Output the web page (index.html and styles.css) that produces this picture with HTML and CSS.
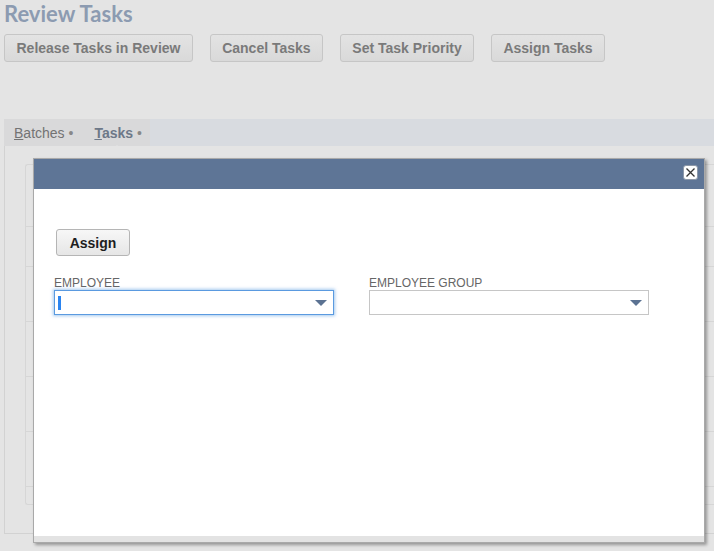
FILE: index.html
```html
<!DOCTYPE html>
<html lang="en">
<head>
<meta charset="utf-8">
<title>Review Tasks</title>
<link rel="stylesheet" href="styles.css">
</head>
<body>
<div class="page">
  <h1 class="title">Review Tasks</h1>
  <div class="toolbar">
    <button class="tbtn">Release Tasks in Review</button>
    <button class="tbtn">Cancel Tasks</button>
    <button class="tbtn">Set Task Priority</button>
    <button class="tbtn">Assign Tasks</button>
  </div>
  <div class="tabbar">
    <div class="tabs">
      <span class="tab"><u>B</u>atches <span class="dot">&bull;</span></span>
      <span class="tab active"><u>T</u>asks <span class="dot">&bull;</span></span>
    </div>
  </div>
  <div class="panel">
    <div class="grid">
      <div class="row r1"></div>
      <div class="row r2"></div>
      <div class="row r3"></div>
      <div class="row r3"></div>
      <div class="row r3"></div>
      <div class="row r3"></div>
    </div>
  </div>
</div>

<div class="modal">
  <div class="modal-head">
    <span class="close">
      <svg width="11" height="11" viewBox="0 0 11 11"><path d="M1.5 1.5 L9.5 9.5 M9.5 1.5 L1.5 9.5" stroke="#333" stroke-width="1.3" fill="none"/></svg>
    </span>
  </div>
  <div class="modal-body">
    <button class="assign">Assign</button>
    <div class="fields">
      <div class="field">
        <label>EMPLOYEE</label>
        <div class="select focused"><span class="caret"></span><span class="arrow"></span></div>
      </div>
      <div class="field">
        <label>EMPLOYEE GROUP</label>
        <div class="select"><span class="arrow"></span></div>
      </div>
    </div>
  </div>
  <div class="modal-foot"></div>
</div>
</body>
</html>
```
FILE: styles.css
```css
html, body {
  margin: 0;
  padding: 0;
  background: #e4e4e4;
  font-family: "Liberation Sans", Arial, sans-serif;
  overflow: hidden;
}
.page {
  padding: 0 0 0 4px;
  width: 720px;
}
.title {
  margin: 0;
  font-family: Lato, "Liberation Sans", sans-serif;
  font-weight: 700;
  font-size: 22px;
  line-height: 28px;
  color: #8c9bb1;
  height: 34px;
}
.toolbar {
  display: flex;
  gap: 16.7px;
  height: 28px;
}
.tbtn {
  font-family: "Liberation Sans", Arial, sans-serif;
  font-weight: 700;
  font-size: 14px;
  color: #7a7a7a;
  height: 28px;
  padding: 0 11.5px;
  border: 1px solid #c6c6c6;
  border-radius: 3px;
  background: linear-gradient(#e3e3e3, #d9d9d9);
  margin: 0;
}
.tabbar {
  margin-top: 57px;
  height: 27px;
  background: #d8dbe0;
  display: flex;
}
.tabs {
  width: 146px;
  background: #d9d9da;
  position: relative;
  display: flex;
  align-items: center;
  font-size: 14px;
  color: #737373;
}
.tab {
  padding-left: 10px;
  margin-right: 21px;
  position: relative;
}
.tab .dot { font-size: 14px; color: #888; }
.tab.active {
  font-weight: 700;
  color: #6d7888;
  padding-left: 0;
  margin-right: 0;
}
.tab.active .dot { font-weight: 400; }
.tab.active::after {
  content: "";
  position: absolute;
  left: 18px;
  bottom: -9px;
  border: 5px solid transparent;
  border-bottom-color: #e4e4e4;
  border-top: 0;
}
.panel {
  height: 388px;
  border: 1px solid #d2d2d2;
  border-top: 0;
  padding: 18px 0 0 20px;
  box-sizing: border-box;
}
.grid {
  height: 339px;
  border: 1px solid #d6d6d6;
  border-radius: 3px;
  border-right: 0;
}
.row { border-bottom: 1px solid #d6d6d6; box-sizing: border-box; }
.r1 { height: 62px; }
.r2 { height: 40px; }
.r3 { height: 55px; }

.modal {
  position: absolute;
  left: 33px;
  top: 158px;
  width: 672px;
  height: 385px;
  background: #fff;
  border: 1px solid #a9a9a9;
  box-sizing: border-box;
  box-shadow: 2px 2px 3px rgba(0,0,0,0.35);
  display: flex;
  flex-direction: column;
}
.modal-head {
  height: 30px;
  background: #5e7596;
  display: flex;
  justify-content: flex-end;
  align-items: flex-start;
  padding: 6px 6px 0 0;
  box-sizing: border-box;
}
.close {
  width: 15px;
  height: 15px;
  background: #fff;
  border: 1px solid #8d98a8;
  border-radius: 3px;
  box-sizing: border-box;
  display: flex;
  align-items: center;
  justify-content: center;
}
.modal-body {
  flex: 1;
  padding: 40px 0 0 20px;
}
.assign {
  font-family: "Liberation Sans", Arial, sans-serif;
  font-weight: 700;
  font-size: 14px;
  color: #1e1e1e;
  height: 27px;
  width: 74px;
  padding: 0;
  margin: 0 0 0 2px;
  border: 1px solid #b5b5b5;
  border-radius: 3px;
  background: linear-gradient(#f7f7f7, #e6e6e6);
  display: block;
}
.fields {
  display: flex;
  gap: 35px;
  margin-top: 20px;
}
.field label {
  display: block;
  font-size: 12px;
  line-height: 14px;
  color: #666;
  height: 14px;
}
.select {
  width: 280px;
  height: 25px;
  border: 1px solid #c6c6c6;
  box-sizing: border-box;
  position: relative;
  display: flex;
  align-items: center;
  justify-content: space-between;
  padding: 0 6px 0 3px;
}
.select.focused {
  border-color: #5a9ae0;
  box-shadow: 0 0 3px 1px rgba(90,154,224,0.55);
}
.caret {
  width: 3px;
  height: 14px;
  background: #2a84f0;
}
.arrow {
  margin-left: auto;
  width: 0;
  height: 0;
  border-left: 6px solid transparent;
  border-right: 6px solid transparent;
  border-top: 6px solid #5b7292;
}
.modal-foot {
  height: 6px;
  background: #e3e3e3;
}
```
